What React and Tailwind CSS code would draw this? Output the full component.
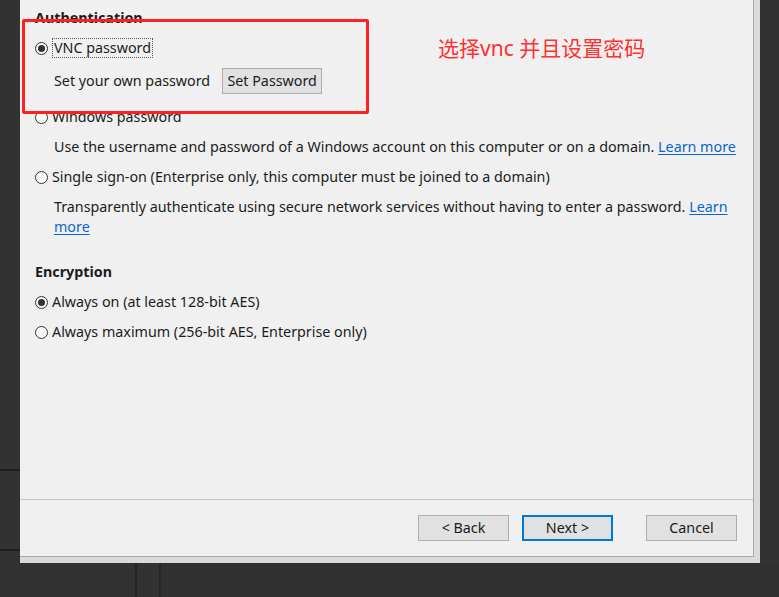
import React from 'react';

const Radio = ({ checked }) => (
    <span className="w-[13px] h-[13px] rounded-full border border-[#333] bg-[#f8f8f8] flex items-center justify-center shrink-0">
        {checked && <span className="w-[7px] h-[7px] rounded-full bg-[#333]" />}
    </span>
);

const Link = ({ children }) => (
    <a href="#" className="text-[#0a66cc] underline underline-offset-2">{children}</a>
);

const Btn = ({ children, primary }) => (
    <button className={`w-[91px] h-[26px] bg-[#e1e1e1] border text-[14.3px] text-[#1a1a1a] ${primary ? 'border-[#0078d7] border-2' : 'border-[#adadad]'}`}>
        {children}
    </button>
);

export default function App() {
    return (
        <div className="w-[779px] h-[597px] bg-[#323232] overflow-hidden relative text-[#1c1c1c] text-[14.3px]" style={{ fontFamily: '"Noto Sans", "Noto Sans CJK SC", sans-serif' }}>
            <div className="flex h-[563px]">
                {/* left strip of the window behind */}
                <div className="w-[20px] shrink-0 flex flex-col">
                    <div className="h-[469px]" />
                    <div className="h-[2px] bg-[#1f1f1f]" />
                    <div className="h-[78px]" />
                    <div className="h-[2px] bg-[#1f1f1f]" />
                </div>

                {/* dialog */}
                <div className="w-[740px] shrink-0 bg-[#dadada] pr-[6px] pb-[6px]">
                    <div className="h-full bg-[#f0f0f0] border-r border-b border-[#a8a8a8] flex flex-col">
                        <div className="flex-1 pl-[15px] pt-[2px]">
                            <div className="h-[31px] pt-[1px] flex items-center font-bold">Authentication</div>
                            <div className="h-[30px] flex items-center gap-[4px]">
                                <Radio checked />
                                <span className="border border-dotted border-[#555] px-px leading-[18px]">VNC password</span>
                            </div>
                            <div className="h-[36px] mb-[2px] flex items-center pl-[19px] gap-[12px]">
                                <span>Set your own password</span>
                                <button className="h-[26px] w-[100px] bg-[#e1e1e1] border border-[#adadad]">Set Password</button>
                            </div>
                            <div className="h-[32px] flex items-center gap-[4px]">
                                <Radio />
                                <span>Windows password</span>
                            </div>
                            <div className="h-[28px] flex items-center pl-[19px]">
                                <span>Use the username and password of a Windows account on this computer or on a domain. <Link>Learn more</Link></span>
                            </div>
                            <div className="h-[32px] flex items-center gap-[4px]">
                                <Radio />
                                <span>Single sign-on (Enterprise only, this computer must be joined to a domain)</span>
                            </div>
                            <p className="mt-[4px] pl-[19px] pr-[14px] leading-[20px]">
                                Transparently authenticate using secure network services without having to enter a password. <Link>Learn more</Link>
                            </p>
                            <div className="mt-[25px] h-[20px] flex items-center font-bold">Encryption</div>
                            <div className="mt-[5px] h-[30px] flex items-center gap-[4px]">
                                <Radio checked />
                                <span>Always on (at least 128-bit AES)</span>
                            </div>
                            <div className="h-[30px] flex items-center gap-[4px]">
                                <Radio />
                                <span>Always maximum (256-bit AES, Enterprise only)</span>
                            </div>
                        </div>
                        <div className="h-[57px] shrink-0 border-t border-[#c4c4c4] flex items-start pt-[15px] pr-[16px] justify-end">
                            <Btn>&lt; Back</Btn>
                            <div className="ml-[13px]"><Btn primary>Next &gt;</Btn></div>
                            <div className="ml-[33px]"><Btn>Cancel</Btn></div>
                        </div>
                    </div>
                </div>
                <div className="flex-1" />
            </div>

            {/* window behind, bottom */}
            <div className="flex h-[34px]">
                <div className="w-[137px] border-r-2 border-[#222]" />
                <div className="w-[24px] border-r-2 border-[#262626]" />
                <div className="flex-1 bg-[#303030]" />
            </div>

            {/* red annotation */}
            <div className="absolute left-[22px] top-[19px] w-[347px] h-[95px] border-[3px] border-[#ff2020] rounded-[2px]" />
            <div className="absolute left-[438px] top-[33px] text-[21px] text-[#ff3030] leading-[30px]">选择vnc 并且设置密码</div>
        </div>
    );
}
